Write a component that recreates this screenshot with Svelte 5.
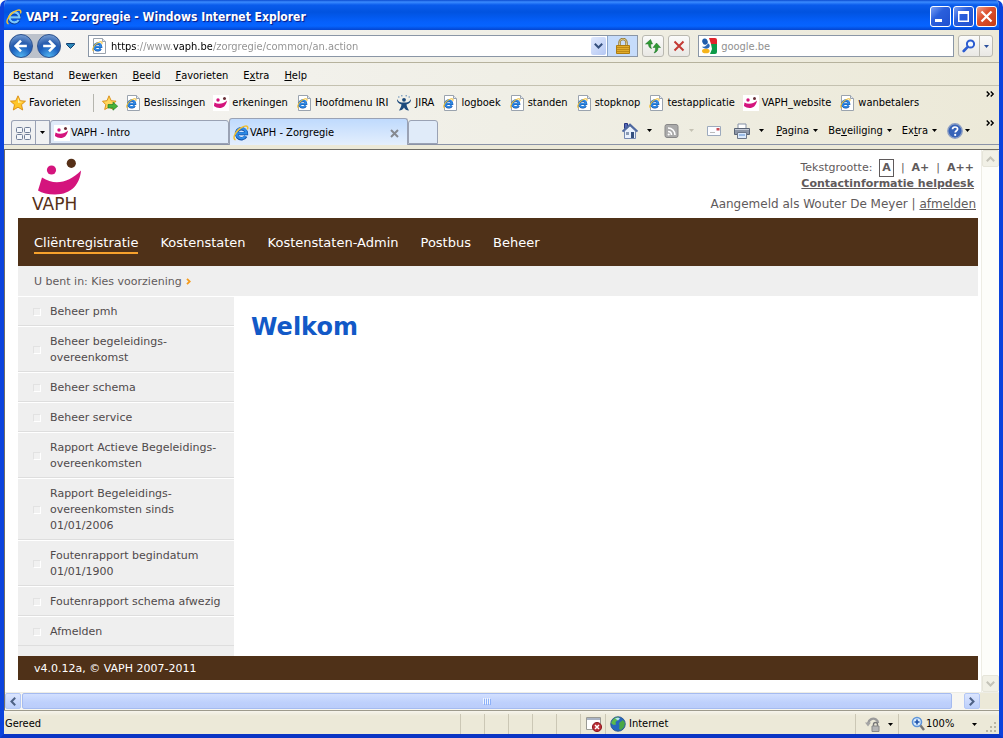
<script>
  const menus = [
    ['B', 'e', 'stand'],
    ['Be', 'w', 'erken'],
    ['', 'B', 'eeld'],
    ['', 'F', 'avorieten'],
    ['E', 'x', 'tra'],
    ['', 'H', 'elp']
  ];
  const favourites = [
    { icon: 'ie', label: 'Beslissingen' },
    { icon: 'vaph', label: 'erkeningen' },
    { icon: 'ie', label: 'Hoofdmenu IRI' },
    { icon: 'jira', label: 'JIRA' },
    { icon: 'ie', label: 'logboek' },
    { icon: 'ie', label: 'standen' },
    { icon: 'ie', label: 'stopknop' },
    { icon: 'ie', label: 'testapplicatie' },
    { icon: 'vaph', label: 'VAPH_website' },
    { icon: 'ie', label: 'wanbetalers' }
  ];
  const commands = [
    ['', 'P', 'agina'],
    ['Be', 'v', 'eiliging'],
    ['Ex', 't', 'ra']
  ];
  const sections = ['Cliëntregistratie', 'Kostenstaten', 'Kostenstaten-Admin', 'Postbus', 'Beheer'];
  const links = [
    ['Beheer pmh'],
    ['Beheer begeleidings-', 'overeenkomst'],
    ['Beheer schema'],
    ['Beheer service'],
    ['Rapport Actieve Begeleidings-', 'overeenkomsten'],
    ['Rapport Begeleidings-', 'overeenkomsten sinds', '01/01/2006'],
    ['Foutenrapport begindatum', '01/01/1900'],
    ['Foutenrapport schema afwezig'],
    ['Afmelden']
  ];
  let address = $state('https://www.vaph.be/zorgregie/common/an.action');
  let query = $state('');
</script>

{#snippet eLogo(light)}
  <path d="M12.800 11.200A5 5 0 1 1 13.400 8.600H4.500" fill="none" stroke={light ? '#0d3f9a' : '#1450a8'} stroke-width="3.400" />
  <path d="M12.600 11A5 5 0 1 1 13.400 8.400H4.500" fill="none" stroke={light ? '#7cc8fb' : '#2f8be6'} stroke-width="2.300" />
  <path d="M2.600 14.800C-.4 14 1.200 8.600 5.600 4.600 9.200 1.300 13.600.2 14.600 1.800c.4.700.2 1.600-.3 2.600" fill="none" stroke="#f0bf35" stroke-width="1.500" />
{/snippet}

{#snippet ieBare(light)}
  <svg class="i16" viewBox="0 0 16 16" aria-hidden="true">{@render eLogo(light)}</svg>
{/snippet}

{#snippet iePage()}
  <svg class="i16" viewBox="0 0 16 16" aria-hidden="true">
    <path d="M2.500.500h9l3 3v12h-12Z" fill="#fff" stroke="#9aa3ae" />
    <path d="M11.500.500v3h3" fill="#e4e9f0" stroke="#9aa3ae" />
    <g transform="translate(1 3) scale(.68)">{@render eLogo(false)}</g>
  </svg>
{/snippet}

{#snippet vaphIcon()}
  <svg class="i16" viewBox="0 0 16 16" aria-hidden="true">
    <rect width="16" height="16" fill="#fff" />
    <circle cx="5" cy="5" r="1.700" fill="#d4147d" />
    <circle cx="11.500" cy="3.500" r="1.500" fill="#6b2f38" />
    <path d="M1.500 7.500c4 2.200 8.500 1.500 12.500-2-.8 5-3.600 7.500-7.500 7.500-2 0-4-.7-5.600-2Z" fill="#d4147d" />
  </svg>
{/snippet}

{#snippet star()}
  <svg class="i16" viewBox="0 0 16 16" aria-hidden="true">
    <path d="M8 .8 10.200 5.700 15.500 6.200 11.500 9.700 12.700 15 8 12.200 3.300 15 4.500 9.700.5 6.200 5.800 5.700Z" fill="#ffc629" stroke="#d98a0e" stroke-width=".9" />
    <path d="M8 2.800 9.500 6.500 13 6.900 8 8Z" fill="#fff0a0" />
  </svg>
{/snippet}

{#snippet down()}
  <svg class="arrow" viewBox="0 0 5 3" aria-hidden="true"><path d="M0 0h5L2.500 3Z" fill="currentColor" /></svg>
{/snippet}

{#snippet chevrons()}
  <svg class="more" viewBox="0 0 9 6" aria-hidden="true"><path d="m.7.500 2.500 2.500L.7 5.500M4.700.500 7.200 3 4.700 5.500" fill="none" stroke="#000" stroke-width="1.400" /></svg>
{/snippet}

<div class="window">
  <header class="titlebar">
    {@render ieBare(true)}
    <span class="title">VAPH - Zorgregie - Windows Internet Explorer</span>
    <button class="cap" aria-label="Minimaliseren"><svg viewBox="0 0 19 19"><path d="M4 12h7v3H4Z" fill="#fff" /></svg></button>
    <button class="cap" aria-label="Maximaliseren"><svg viewBox="0 0 19 19"><path d="M4 4h11v11H4ZM5.500 7v6.500h8V7Z" fill="#fff" fill-rule="evenodd" /></svg></button>
    <button class="cap close" aria-label="Sluiten"><svg viewBox="0 0 19 19"><path d="m4.500 4.500 10 10m0-10-10 10" stroke="#fff" stroke-width="2.200" /></svg></button>
  </header>

  <div class="chrome">
    <div class="navrow">
      <div class="travel">
        <button class="round" aria-label="Vorige"><svg viewBox="0 0 24 24"><path d="M12 5.500 5.500 12l6.500 6.500M6 12h13" fill="none" stroke="#fff" stroke-width="3" /></svg></button>
        <button class="round" aria-label="Volgende"><svg viewBox="0 0 24 24"><path d="m12 5.500 6.500 6.500-6.500 6.500M18 12H5" fill="none" stroke="#fff" stroke-width="3" /></svg></button>
      </div>
      <button class="recent" aria-label="Recente pagina's"><svg viewBox="0 0 9 6"><path d="M.500.500h8v1l-4 4-4-4Z" fill="#2b87b9" stroke="#143f70" /></svg></button>
      <div class="address">
        {@render iePage()}
        <input class="url" aria-label="Adres" bind:value={address} />
        <button class="drop" aria-label="Adressen tonen"><svg viewBox="0 0 9 6"><path d="m.8.8 3.700 3.700L8.200.8" fill="none" stroke="#35507e" stroke-width="2" /></svg></button>
        <button class="lock" aria-label="Beveiligingsrapport">
          <svg viewBox="0 0 16 16"><path d="M4.500 8V4.500a3.500 3.500 0 0 1 7 0V8" fill="none" stroke="#8f7430" stroke-width="2.400" /><path d="M4.500 8V4.500a3.500 3.500 0 0 1 7 0V8" fill="none" stroke="#dcc98a" /><path d="M1.500 7.500h13v8h-13Z" fill="#e2ac2a" stroke="#ad7c12" /><path d="M2 9.500h12M2 11.500h12M2 13.500h12" stroke="#bd8a18" /></svg>
        </button>
      </div>
      <button class="square" aria-label="Vernieuwen"><svg viewBox="0 0 16 16"><path d="M5.500 1.500.500 6h3c0 2.500 1 4 3 4.500C5.800 9 5.700 8 5.700 6H7.500Z" fill="#2f9a33" stroke="#1c6f26" stroke-width=".5" /><path d="m11.500 5 4 4.500H13c0 3-1 4.500-4 5.500 1.500-2 1.500-3 1.500-5.500H8Z" fill="#2f9a33" stroke="#1c6f26" stroke-width=".5" /></svg></button>
      <button class="square stop" aria-label="Stoppen"><svg viewBox="0 0 16 16"><path d="m3.500 3.500 9 9m0-9-9 9" stroke="#c33a35" stroke-width="2" /></svg></button>
      <div class="search">
        <svg class="i16" viewBox="0 0 16 16" aria-hidden="true"><path d="M0 0h16v16H0Z" fill="#fff" /><path d="M8 0h6a2 2 0 0 1 2 2v4H10Z" fill="#e0242c" /><path d="M10 6h6v8a2 2 0 0 1-2 2H9l2-5Z" fill="#0c9a48" /><ellipse cx="4" cy="3.600" rx="2.700" ry="3.200" transform="rotate(-20 4 3.600)" fill="#1f5cab" /><path d="M1 8.500c3 1 5-1.500 6-3 2 .8 2.500 3 .5 4.500S2 10.500 1 8.500Z" fill="#2b68b8" /><ellipse cx="4.800" cy="13" rx="3.800" ry="2.300" fill="#f6b41c" /></svg>
        <input aria-label="Zoeken" placeholder="google.be" bind:value={query} />
      </div>
      <div class="go">
        <button aria-label="Zoeken"><svg viewBox="0 0 14 14"><circle cx="8.500" cy="5" r="3.600" fill="#f2f8ff" stroke="#2c5cd0" stroke-width="2" /><path d="m5.700 7.800-4 4.200" stroke="#2c5cd0" stroke-width="2.600" stroke-linecap="round" /></svg></button>
        <button aria-label="Zoekopties">{@render down()}</button>
      </div>
    </div>

    <nav class="menubar" aria-label="Menu">
      {#each menus as [before, key, after]}
        <button>{before}<u>{key}</u>{after}</button>
      {/each}
    </nav>

    <div class="favbar">
      <button class="fav first">{@render star()}Favorieten</button>
      <button class="add" aria-label="Aan Favorieten toevoegen">
        <svg class="i16" viewBox="0 0 16 16"><path d="M7 .8 9.200 5.700 14 6.200 10.500 9.700 11.500 14.500 7 12.200 2.700 14.500 3.800 9.700.500 6.200 5 5.700Z" fill="#ffd75c" stroke="#d98a0e" stroke-width=".9" /><path d="M6 9.500h5V7.200l4.700 4-4.700 4V13H6Z" fill="#47b338" stroke="#23802a" stroke-width=".7" /></svg>
      </button>
      {#each favourites as fav}
        <a class="fav" href="#top">
          {#if fav.icon === 'ie'}
            {@render iePage()}
          {:else if fav.icon === 'vaph'}
            {@render vaphIcon()}
          {:else}
            <svg class="i16" viewBox="0 0 16 16" aria-hidden="true"><circle cx="8" cy="4.800" r="1.900" fill="#1d4a7c" /><path d="M1 4c1.500 3 3.500 3.500 7 3.500S13.500 7 15 4c.3 2.500-1 4.500-4.500 5.500.3 2 1 3.500 2.500 6-2.500 0-4-1-5-3-1 2-2.500 3-5 3 1.500-2.500 2.200-4 2.500-6C2 8.500.700 6.500 1 4Z" fill="#1d4a7c" /><path d="M2 2h1.500M5 .800h1.500M9.500.800H11M12.500 2H14" stroke="#5b86b5" /></svg>
          {/if}
          {fav.label}
        </a>
      {/each}
      <button class="overflow" aria-label="Meer favorieten">{@render chevrons()}</button>
    </div>

    <div class="tabbar">
      <div class="quick">
        <button aria-label="Snelle tabbladen"><svg class="i16" viewBox="0 0 16 16"><g fill="#f4f7fb" stroke="#6f7d96"><rect x=".500" y="2.500" width="6" height="5" rx="1" /><rect x="8.500" y="2.500" width="6" height="5" rx="1" /><rect x=".500" y="9.500" width="6" height="5" rx="1" /><rect x="8.500" y="9.500" width="6" height="5" rx="1" /></g></svg></button>
        <button class="list" aria-label="Tabbladenlijst">{@render down()}</button>
      </div>
      <button class="tab">{@render vaphIcon()}VAPH - Intro</button>
      <div class="tab active">
        {@render ieBare(false)}<span>VAPH - Zorgregie</span>
        <button aria-label="Tabblad sluiten"><svg viewBox="0 0 9 9"><path d="m1 1 7 7m0-7L1 8" stroke="#85898f" stroke-width="2" /></svg></button>
      </div>
      <button class="tab new" aria-label="Nieuw tabblad"></button>
      <div class="commands">
        <button class="cmd wide" aria-label="Startpagina"><svg class="i16" viewBox="0 0 16 16"><path d="M2.500.500h3v5h-3Z" fill="#5468b8" stroke="#27357f" /><path d="M2.500 8v7.500h11V8L8 3Z" fill="#e9f1fc" stroke="#7689b1" /><path d="M.500 8.500 8 1.500l7.500 7" fill="none" stroke="#4d679f" stroke-width="1.800" /><path d="M4 9h3v3H4Z" fill="#8a9bb4" /><path d="M9 9h3v6H9Z" fill="#35507e" /></svg>{@render down()}</button>
        <button class="cmd wide dim" aria-label="Feeds"><svg class="i16" viewBox="0 0 16 16"><rect x="1" y="1.500" width="13" height="13" rx="2" fill="#aaa" stroke="#888" /><path d="M4 5c4 0 7 3 7 7M4 8.500c2 0 3.500 1.500 3.500 3.500" fill="none" stroke="#fff" stroke-width="1.600" /><circle cx="4.700" cy="11.500" r="1.100" fill="#fff" /></svg>{@render down()}</button>
        <button class="cmd mail" aria-label="E-mail lezen"><svg class="i16" viewBox="0 0 16 16"><path d="M1.500 3.500h13v9h-13Z" fill="#fbfcff" stroke="#9daabd" /><path d="M10.500 5h3v2.500h-3Z" fill="#c94a52" /><path d="M4 9.500h5" stroke="#bbb" /></svg></button>
        <button class="cmd wide" aria-label="Afdrukken"><svg class="i16" viewBox="0 0 16 16"><path d="M4 1h8v5H4Z" fill="#fff" stroke="#8591a6" /><path d="M.500 5.500h15v6H.500Z" fill="#8c95a5" stroke="#5a6475" /><path d="M1 6.500h14" stroke="#c5ccd8" /><path d="M3.500 9.500h9v6h-9Z" fill="#dbe9fb" stroke="#6d7788" /><path d="M5 12h6" stroke="#5a8dd0" /></svg>{@render down()}</button>
        {#each commands as [before, key, after]}
          <button class="cmd word"><span>{before}<u>{key}</u>{after}</span>{@render down()}</button>
        {/each}
        <button class="cmd help" aria-label="Help"><svg class="i16" viewBox="0 0 16 16"><circle cx="8" cy="8" r="7.200" fill="#3763b8" stroke="#8d9fc4" stroke-width="1.400" /><path d="M5.500 6.300C5.600 4.600 6.700 4 8 4c1.500 0 2.600.7 2.600 2.100 0 1.600-2.400 1.700-2.400 3.500" fill="none" stroke="#fff" stroke-width="1.700" /><circle cx="8.200" cy="11.900" r="1.100" fill="#fff" /></svg>{@render down()}</button>
      </div>
      <button class="overflow" aria-label="Meer opdrachten">{@render chevrons()}</button>
    </div>
  </div>

  <div class="frame">
    <div class="viewport">
      <div class="page" id="top">
        <div class="masthead">
          <div class="logo">
            <svg viewBox="0 0 46 38" aria-hidden="true">
              <circle cx="13.500" cy="13" r="4.600" fill="#d4147d" />
              <circle cx="33.300" cy="6.300" r="4.600" fill="#563018" />
              <path d="M4 20.500c13 8.500 27 5 39-7-1 13-9 24-26 24-7 0-13-1.500-17-4Z" fill="#d4147d" />
            </svg>
            <span>VAPH</span>
          </div>
          <div class="user">
            <p class="size">Tekstgrootte: <a class="current" href="#top">A</a><span>|</span><a href="#top">A+</a><span>|</span><a href="#top">A++</a></p>
            <p class="contact"><a href="#top">Contactinformatie helpdesk</a></p>
            <p class="session">Aangemeld als Wouter De Meyer | <a href="#top">afmelden</a></p>
          </div>
        </div>
        <nav class="sections" aria-label="Hoofdnavigatie">
          {#each sections as section, i}
            <a href="#top" class:on={i === 0}>{section}</a>
          {/each}
        </nav>
        <div class="crumbs">U bent in: Kies voorziening <svg viewBox="0 0 5 7" aria-hidden="true"><path d="m1 .8 2.700 2.700L1 6.200" fill="none" stroke="#f49b1c" stroke-width="1.800" /></svg></div>
        <div class="body">
          <ul class="side">
            {#each links as lines}
              <li><i></i><a href="#top">{#each lines as line, n}{#if n > 0}<br />{/if}{line}{/each}</a></li>
            {/each}
          </ul>
          <main><h1>Welkom</h1></main>
        </div>
        <footer>v4.0.12a, © VAPH 2007-2011</footer>
      </div>
      <div class="vscroll">
        <button aria-label="Omhoog"><svg viewBox="0 0 9 6"><path d="M.8 5.200 4.500 1.500l3.700 3.700" fill="none" stroke="#c4c3b8" stroke-width="2" /></svg></button>
        <button aria-label="Omlaag"><svg viewBox="0 0 9 6"><path d="m.8.800 3.700 3.700L8.200.8" fill="none" stroke="#c4c3b8" stroke-width="2" /></svg></button>
      </div>
    </div>
    <div class="hscroll">
      <button aria-label="Naar links"><svg viewBox="0 0 6 9"><path d="M5.200.8 1.500 4.500l3.700 3.700" fill="none" stroke="#4d6185" stroke-width="2" /></svg></button>
      <div class="track"><div class="thumb"><svg viewBox="0 0 8 7" aria-hidden="true"><path d="M.500 0v6M2.500 0v6M4.500 0v6M6.500 0v6" stroke="#eef4fe" /><path d="M1.500 1v6M3.500 1v6M5.500 1v6M7.500 1v6" stroke="#8cb0f8" /></svg></div></div>
      <button aria-label="Naar rechts"><svg viewBox="0 0 6 9"><path d="m.8.800 3.700 3.700L.8 8.200" fill="none" stroke="#4d6185" stroke-width="2" /></svg></button>
      <div class="corner"></div>
    </div>
  </div>

  <div class="status">
    <span class="ready">Gereed</span>
    <i></i><i></i><i></i><i></i><i></i>
    <span class="pane"><svg class="i16" viewBox="0 0 16 16" aria-hidden="true"><path d="M.500 1.500h14v12H.500Z" fill="#fff" stroke="#9a9a94" /><path d="M1 3h13" stroke="#a9b3c4" stroke-width="2" /><circle cx="11" cy="11" r="4.600" fill="#b92c34" stroke="#8e1d26" /><path d="m9 9 4 4m0-4-4 4" stroke="#fff" stroke-width="1.500" /></svg></span>
    <span class="pane zone"><svg class="i16" viewBox="0 0 16 16" aria-hidden="true"><circle cx="8" cy="8" r="7.300" fill="#2767bd" stroke="#264f86" stroke-width=".8" /><path d="M3 3.500C5 1.500 7 1 9 1.500L8 4 5.500 6 6 8.500 3.500 9 1 7Z" fill="#5cba4c" /><path d="M9 7l4-3 2 3-1 4-3 3-2-1 .5-3Z" fill="#4aa845" /><path d="M5 2.500c2-1 4-1 5 0L8 4.500Z" fill="#b7e2f6" /></svg>Internet</span>
    <button class="pane guard" aria-label="Beveiligde modus"><svg class="i16" viewBox="0 0 16 16"><path d="M3 7.500C4 3 8 1.500 11 3.500c1.500 1 2 2 2 3.500" fill="none" stroke="#9a9a9a" stroke-width="2.400" /><path d="M0 6.500h6L3 10.500Z" fill="#a5a5a5" /><path d="M8.500 10V8.500a2 2 0 0 1 4 0V10" fill="none" stroke="#777" stroke-width="1.400" /><path d="M7 10h7v5.500H7Z" fill="#b5b5b5" stroke="#888" /></svg>{@render down()}</button>
    <button class="pane zoom"><svg class="i16" viewBox="0 0 16 16" aria-hidden="true"><circle cx="7" cy="6" r="4.500" fill="#d8ecff" stroke="#5e94d8" stroke-width="1.600" /><path d="M7 3.500v5M4.500 6h5" stroke="#1c50a8" stroke-width="1.600" /><path d="m10.500 9.500 3.500 4.500" stroke="#777" stroke-width="2.400" /></svg><span>100%</span>{@render down()}</button>
    <svg class="grip" viewBox="0 0 12 12" aria-hidden="true"><path d="M8 0h2v2H8ZM8 4h2v2H8ZM8 8h2v2H8ZM4 4h2v2H4ZM4 8h2v2H4ZM0 8h2v2H0Z" fill="#bab6a3" /></svg>
  </div>
</div>

<style>
  :global(body) { background: #fff; }
  .window, .window * { box-sizing: border-box; }
  .window {
    min-height: 100vh;
    display: flex;
    flex-direction: column;
    border: solid #0b43dd;
    border-width: 0 4px 4px;
    border-bottom-color: #0a35c4;
    border-radius: 7px 7px 0 0;
    overflow: hidden;
    background: #ece9d8;
    font: 11px/16px "DejaVu Sans Condensed", "DejaVu Sans", sans-serif;
    color: #000;
  }
  button, input { font: inherit; color: inherit; border: 0; padding: 0; margin: 0; background: none; }
  button { display: inline-flex; align-items: center; justify-content: center; flex: none; }
  a { color: inherit; text-decoration: none; }
  svg { display: block; flex: none; }
  p, h1, ul { margin: 0; padding: 0; }
  .i16 { width: 16px; height: 16px; }
  .arrow { width: 5px; height: 3px; }
  .more { width: 9px; height: 6px; }

  .titlebar {
    display: flex;
    align-items: center;
    gap: 2px;
    height: 30px;
    margin: 0 -4px;
    padding: 3px 6px 0;
    background: linear-gradient(#0a4bd0 0, #3b8bff 2px, #0a5cec 5px, #0153e0 12px, #0560fc 22px, #0664ff 26px, #0445d0 30px);
  }
  .title {
    flex: 1;
    padding: 1px 0 0 2px;
    color: #fff;
    font: bold 12px/16px "DejaVu Sans Condensed", "DejaVu Sans", sans-serif;
    text-shadow: 1px 1px 1px #0a1883;
  }
  .cap {
    width: 21px;
    height: 21px;
    border: 1px solid #fff;
    border-radius: 3px;
    background: linear-gradient(135deg, #7ba0f4, #2a5fdc 40%, #1f50d0);
  }
  .cap svg { width: 19px; height: 19px; }
  .close { background: linear-gradient(135deg, #f0a08a, #dd5130 40%, #c43c14); }

  .chrome { background: linear-gradient(90deg, #f5f4f3, #f0efe6 50%, #ece9d8); }

  .navrow { display: flex; align-items: center; height: 33px; padding: 0 6px 0 5px; border-bottom: 1px solid #b6b29d; }
  .travel { display: flex; gap: 4px; border-radius: 12px; background: #bcc2cb; }
  .round {
    width: 24px;
    height: 24px;
    border: 1px solid #2c5290;
    border-radius: 50%;
    background: radial-gradient(circle at 50% 100%, #52b7f2, #1c5fbd 45%, #2c5fae 60%, #8fb3e0);
  }
  .round svg { width: 20px; height: 20px; }
  .recent { width: 19px; margin-right: 8px; }
  .recent svg { width: 9px; height: 6px; }
  .address, .search { display: flex; align-items: center; min-width: 0; height: 22px; border: 1px solid #8a96a6; background: #fff; }
  .address { flex: 553 1 0; padding-left: 2px; margin-right: 4px; }
  .search { flex: 255 1 0; padding-left: 2px; margin: 0 4px 0 8px; }
  .address input, .search input { flex: 1; min-width: 0; height: 20px; padding: 1px 0 0 4px; outline: 0; }
  .address .url {
    background: linear-gradient(90deg, #000 29px, #8f8f8f 29px 66px, #000 66px 105px, #8f8f8f 105px);
    -webkit-background-clip: text;
    background-clip: text;
    color: transparent;
    caret-color: #000;
  }
  .search input::placeholder { color: #8f8f8f; opacity: 1; }
  .drop { width: 15px; height: 18px; border-radius: 2px; background: linear-gradient(135deg, #e0e9fe, #b5c8f3); }
  .drop svg { width: 9px; height: 6px; }
  .lock { width: 30px; height: 20px; margin-left: 1px; border-left: 1px solid #8ba6cc; background: #c6dcfb; }
  .lock svg { width: 16px; height: 16px; }
  .square, .go { height: 22px; border: 1px solid #b9b8b0; border-radius: 3px; background: linear-gradient(#fbfbfa, #e9e8e4); }
  .square { width: 22px; }
  .square svg { width: 16px; height: 16px; }
  .stop { margin-left: 4px; }
  .go { display: flex; }
  .go button { width: 20px; }
  .go button + button { width: 13px; border-left: 1px solid #b9b8b0; color: #2a4f9c; }
  .go button:first-child svg { width: 14px; height: 14px; }

  .menubar { display: flex; align-items: center; gap: 15px; height: 23px; padding: 3px 9px 0; border-bottom: 1px solid #c4c1b0; }

  .favbar { display: flex; align-items: center; gap: 8px; height: 32px; padding: 1px 4px 0 6px; white-space: nowrap; }
  .fav { display: inline-flex; align-items: center; gap: 3px; }
  .first { height: 18px; padding-right: 12px; border-right: 1px solid #b5b5ae; }
  .add { margin-right: -1px; }
  .overflow { align-self: flex-start; margin: 4px 0 0 auto; }

  .tabbar { display: flex; align-items: flex-end; height: 27px; padding: 0 4px 0 7px; border-bottom: 1px solid #8b93a7; white-space: nowrap; }
  .quick { display: flex; height: 24px; border: 1px solid #9aa2b4; border-bottom: 0; border-radius: 3px 0 0 0; background: #f0f1f2; }
  .quick button { width: 23px; }
  .quick .list { width: 14px; border-left: 1px solid #9aa2b4; }
  .tab {
    display: flex;
    align-items: center;
    justify-content: flex-start;
    gap: 1px;
    flex: 0 1 179px;
    height: 24px;
    padding: 2px 8px 0 3px;
    border: 1px solid #9aa2b4;
    border-radius: 3px 3px 0 0;
    background: #e0ebf9;
  }
  .active { height: 27px; margin-bottom: -1px; border-bottom: 0; background: linear-gradient(#bfdafd, #e4effd); }
  .active span { flex: 1; }
  .active button svg { width: 9px; height: 9px; }
  .new { flex-basis: 30px; }
  .commands { display: flex; align-items: center; justify-content: flex-end; flex: 1; height: 27px; padding-right: 16px; }
  .cmd { height: 20px; }
  .wide { gap: 9px; margin-right: 12px; }
  .dim { color: #c5c2b4; }
  .mail { margin-right: 12px; }
  .word { gap: 4px; margin-right: 10px; }
  .help { gap: 2px; }
  .tabbar .overflow { margin: 2px 0 0; }

  .frame { flex: 1; display: flex; flex-direction: column; margin-top: 4px; border: 1px solid #6f6d66; border-width: 1px 0 0 1px; background: #fff; }
  .viewport { flex: 1; display: flex; }
  .page { flex: 1; min-width: 0; padding: 0 3px 0 13px; font-family: Verdana, "DejaVu Sans", sans-serif; color: #5f5a5b; }
  .masthead { display: flex; justify-content: space-between; height: 68px; padding: 6px 2px 0 14px; }
  .logo { padding-top: 1px; color: #563018; font-size: 17px; line-height: 18px; }
  .logo svg { width: 46px; height: 38px; margin-left: 6px; }
  .logo span { display: block; }
  .user { text-align: right; }
  .size { display: flex; justify-content: flex-end; gap: 7px; padding: 4px 2px 0 0; }
  .size a { font-weight: bold; }
  .size .current { margin: -1px 0; border: 1px solid #5f5a5b; padding: 0 2px; }
  .contact { padding-right: 2px; font-weight: bold; }
  .session { padding-top: 3px; font-size: 12px; line-height: 18px; }
  .contact a, .session a { text-decoration: underline; }
  .sections { display: flex; align-items: center; gap: 22px; height: 48px; padding: 3px 16px 0; background: #4f3118; color: #fff; font-size: 13px; line-height: 18px; }
  .sections a { border-bottom: 2px solid transparent; }
  .sections .on { border-color: #f7a12c; }
  .crumbs { display: flex; align-items: center; gap: 4px; height: 30px; padding: 1px 16px 0; background: #efefef; }
  .crumbs svg { width: 5px; height: 7px; }
  .body { display: flex; }
  .side { flex: none; width: 216px; padding-bottom: 10px; list-style: none; background: #efefef; color: #4f4a4b; }
  .side li { display: flex; align-items: center; gap: 9px; padding: 7px 0 5px 15px; border-top: 1px solid #fff; border-bottom: 1px solid #dedede; }
  .side i { width: 8px; height: 8px; border: 1px solid #e2e2e2; border-right-color: #fff; border-bottom-color: #fff; background: #f1f1f1; flex: none; }
  main { flex: 1; padding: 16px 17px; }
  h1 { color: #1259c7; font-size: 24px; line-height: 30px; }
  footer { height: 24px; padding: 1px 16px 0; background: #4f3118; color: #fff; line-height: 24px; }

  .vscroll { display: flex; flex-direction: column; justify-content: space-between; width: 18px; border-left: 1px solid #eeede5; background: #fdfdfa; }
  .vscroll button { height: 17px; border: 1px solid #e6e5da; border-radius: 2px; background: #f1f0e6; }
  .vscroll svg { width: 9px; height: 6px; }
  .hscroll { display: flex; height: 18px; padding-bottom: 1px; border-top: 1px solid #eeede5; background: #f7f6f1; }
  .hscroll button { width: 16px; border: 1px solid #b3c7f5; border-radius: 2px; background: linear-gradient(#dbe5fe, #bccffb); }
  .hscroll button svg { width: 6px; height: 9px; }
  .track { flex: 1; padding: 0 12px 0 1px; }
  .thumb { display: flex; align-items: center; justify-content: center; height: 16px; border: 1px solid #a5bbf0; border-radius: 2px; background: linear-gradient(#d3e0ff, #bed0fc 60%, #bbcdfa); }
  .thumb svg { width: 8px; height: 7px; }
  .corner { width: 19px; background: #ece9d8; }

  .status { display: flex; align-items: center; height: 24px; padding: 3px 1px 0; border-top: 1px solid #9d9a8c; background: linear-gradient(#f6f4ec, #ece9d8 5px, #ece9d8); }
  .ready { flex: 1; }
  .status i { width: 24px; height: 20px; border-left: 1px solid #cbc7b5; }
  .pane { display: flex; align-items: center; justify-content: flex-start; height: 20px; padding-left: 5px; width: 25px; border-left: 1px solid #cbc7b5; }
  .zone { gap: 3px; flex: 0 1 250px; padding-left: 4px; }
  .guard { gap: 7px; width: 43px; padding-left: 9px; }
  .zoom { width: 88px; padding-left: 11px; }
  .zoom span { width: 46px; text-align: left; }
  .grip { width: 12px; height: 12px; align-self: flex-end; }
</style>
